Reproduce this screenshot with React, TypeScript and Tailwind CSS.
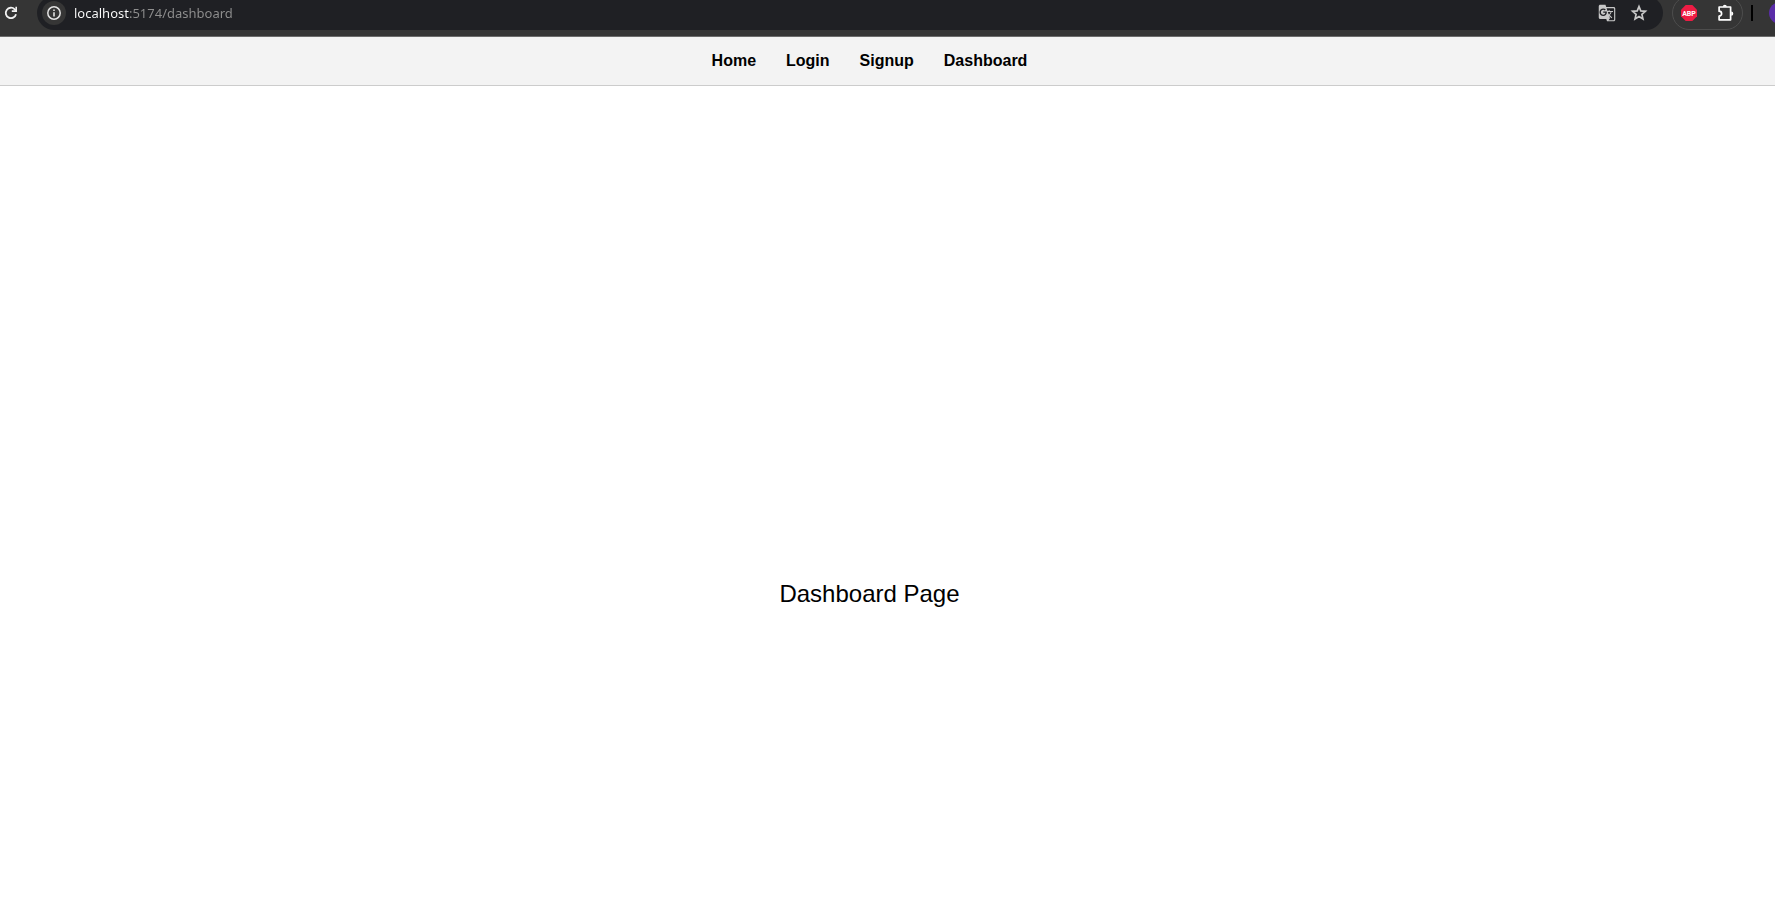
import { MdGTranslate } from "react-icons/md";

const links = [
  { label: "Home", href: "/" },
  { label: "Login", href: "/login" },
  { label: "Signup", href: "/signup" },
  { label: "Dashboard", href: "/dashboard" },
];

function ReloadIcon() {
  return (
    <svg width="14" height="14" viewBox="0 0 14 14" fill="none" stroke="#f1f1f1" aria-hidden="true">
      <path d="M12 8.2A5.2 5.2 0 1 1 10.7 3.3L12 4.6" strokeWidth="1.8" />
      <path d="M12.2 0.8V5.1H7.8" strokeWidth="1.6" />
    </svg>
  );
}

function InfoIcon() {
  return (
    <svg width="14" height="14" viewBox="0 0 14 14" fill="none" stroke="#e3e3e3" aria-hidden="true">
      <circle cx="7" cy="7" r="6.2" strokeWidth="1.5" />
      <path d="M7 6.2V10.4M7 3.5V5.1" strokeWidth="1.6" />
    </svg>
  );
}

function StarIcon() {
  return (
    <svg width="18" height="18" viewBox="1.5 1.3 21 21" fill="none" stroke="#c7c7c7" strokeWidth="2" aria-hidden="true">
      <path d="M12 4.3L14.1 9.3L19.5 9.8L15.4 13.4L16.6 18.7L12 15.9L7.4 18.7L8.6 13.4L4.5 9.8L9.9 9.3Z" />
    </svg>
  );
}

function PuzzleIcon() {
  return (
    <svg width="18" height="18" viewBox="0 0 18 18" aria-hidden="true">
      <path
        d="M2.1 3H13.6V15.8H2.1V12.2A2.5 2.5 0 0 0 2.1 7.2Z"
        fill="none"
        stroke="#ffffff"
        strokeWidth="1.7"
        strokeLinejoin="round"
      />
      <path d="M5.8 2.8A2 2 0 0 1 9.8 2.8ZM14.2 7.6A2.1 2.1 0 0 1 14.2 11.8Z" fill="#ffffff" />
    </svg>
  );
}

function BrowserBar() {
  return (
    <header className="flex h-[37px] shrink-0 items-start overflow-hidden border-b border-[#6b6b6b] bg-[#353535]">
      <button type="button" aria-label="Reload" className="ml-1 mt-1.5 flex h-[14px] w-[14px] shrink-0">
        <ReloadIcon />
      </button>
      <div className="-mt-1 ml-[19px] flex h-[34px] min-w-0 flex-1 items-center rounded-full bg-[#1f2024] pl-[5px] pr-[15px]">
        <button
          type="button"
          aria-label="Site information"
          className="flex h-6 w-6 shrink-0 items-center justify-center rounded-full bg-[#363636]"
        >
          <InfoIcon />
        </button>
        <input
          type="text"
          aria-label="Address"
          defaultValue="localhost:5174/dashboard"
          className="ml-2 h-6 min-w-0 flex-1 bg-[linear-gradient(to_right,#ffffff_55px,#8f8f8f_55px)] bg-clip-text font-['Noto_Sans',sans-serif] text-[13px] text-transparent outline-none"
        />
        <button type="button" aria-label="Translate this page" className="text-[#c7c7c7]">
          <MdGTranslate size={18} />
        </button>
        <button type="button" aria-label="Bookmark this page" className="ml-[14px]">
          <StarIcon />
        </button>
      </div>
      <div className="-mt-1 ml-[9px] flex h-[34px] w-[71px] shrink-0 items-center justify-between rounded-full border border-[#4d4d4d] pl-2 pr-[7px]">
        <button type="button" aria-label="Ad blocker">
          <svg width="16" height="16" viewBox="0 0 16 16" aria-hidden="true">
            <path d="M4.7 0H11.3L16 4.7V11.3L11.3 16H4.7L0 11.3V4.7Z" fill="#ee1c44" />
            <text x="8" y="10.7" textAnchor="middle" fill="#ffffff" className="font-[Roboto,sans-serif] text-[7px] font-bold">
              ABP
            </text>
          </svg>
        </button>
        <button type="button" aria-label="Extensions">
          <PuzzleIcon />
        </button>
      </div>
      <div className="ml-2 mt-[5px] h-4 w-0.5 shrink-0 bg-black" />
      <div className="ml-4 w-1.5 shrink-0">
        <button type="button" aria-label="Profile" className="mt-0.5 block h-[22px] w-[22px] rounded-full bg-[#5a2da8]" />
      </div>
    </header>
  );
}

export default function App() {
  return (
    <div className="flex h-screen flex-col overflow-hidden bg-white font-['Liberation_Sans',Arial,sans-serif] text-black">
      <BrowserBar />
      <nav className="flex shrink-0 justify-center gap-[30px] border-b border-[#cccccc] bg-[#f3f3f3] py-3 pr-9 text-base font-bold">
        {links.map((link) => (
          <a key={link.href} href={link.href}>
            {link.label}
          </a>
        ))}
      </nav>
      <main className="flex flex-1 items-center justify-center pr-9 pt-[203px]">
        <h1 className="text-2xl">Dashboard Page</h1>
      </main>
    </div>
  );
}
